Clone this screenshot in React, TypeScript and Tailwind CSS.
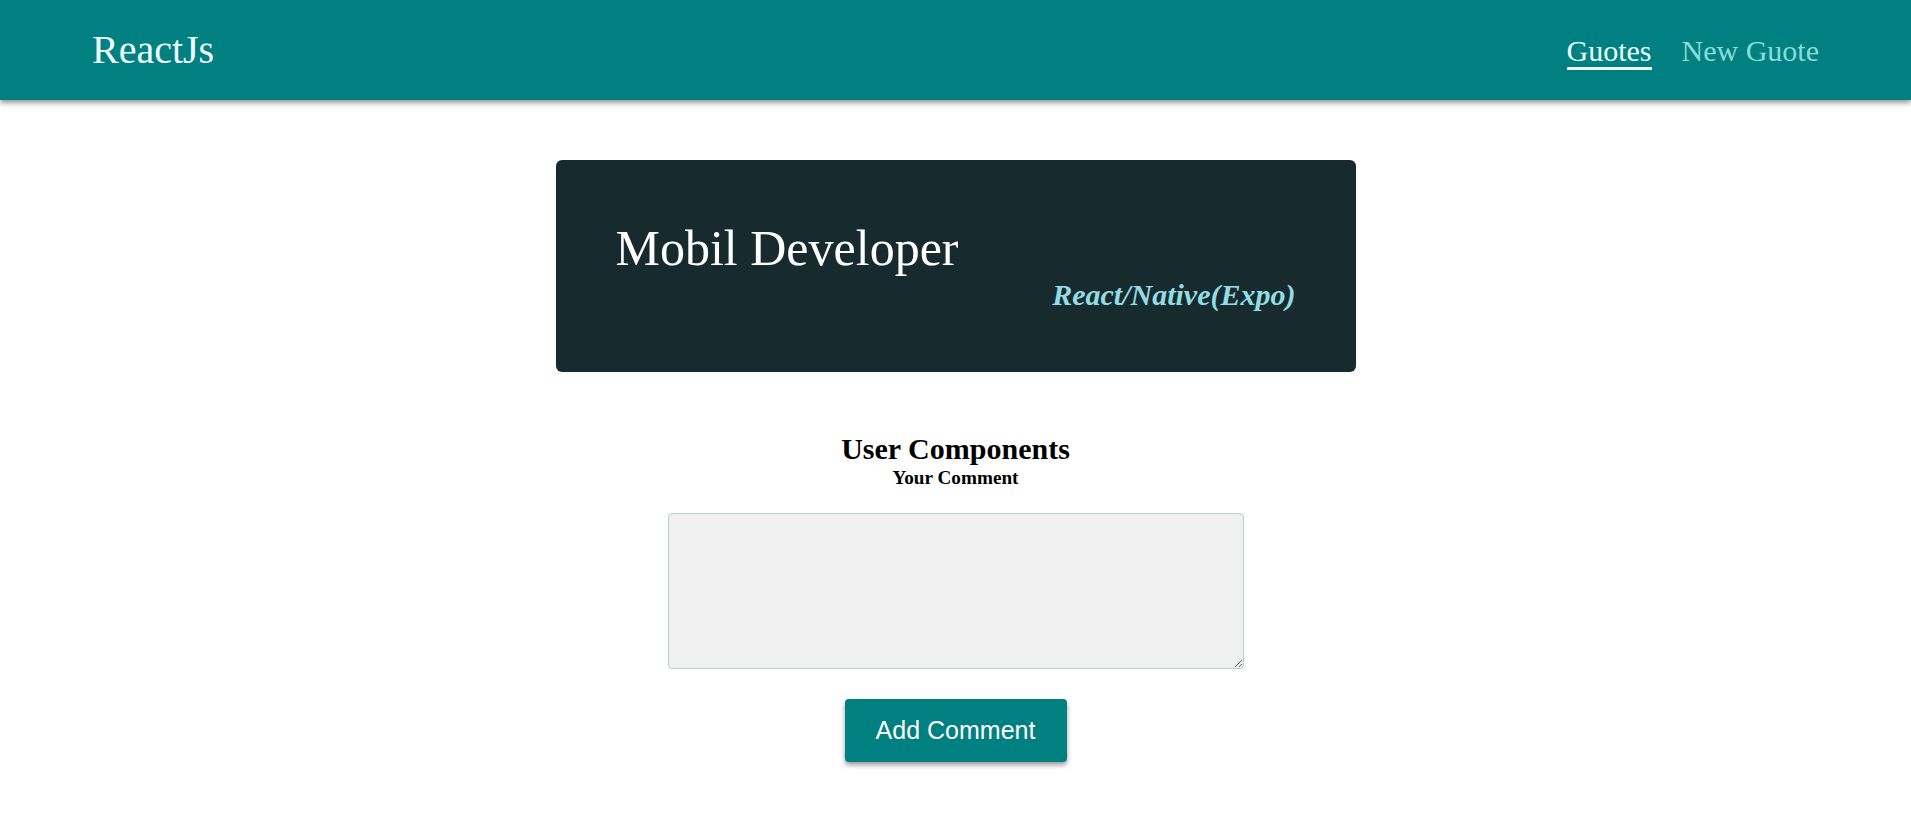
import React from "react";

export default function App() {
  return (
    <div className="min-h-screen bg-white" style={{ fontFamily: '"Liberation Serif", "Times New Roman", serif' }}>
      <header className="flex h-[100px] items-start justify-between bg-[#008080] px-[92px] shadow-[0_3px_5px_rgba(0,0,0,0.4)]">
        <div className="mt-[30px] text-[40px] leading-none text-[#f0fffe]">ReactJs</div>
        <nav className="mt-[36px] flex gap-[30px] text-[30px] leading-none">
          <a className="border-b-[3px] border-[#f0fffe] pb-[1px] text-[#eafffd]">Guotes</a>
          <a className="text-[#8adcd8]">New Guote</a>
        </nav>
      </header>

      <main className="flex flex-col items-center">
        <section className="mt-[60px] flex h-[212px] w-[800px] flex-col rounded-[6px] bg-[#172a2d] px-[60px] pt-[63px]">
          <h1 className="text-[50px] leading-none text-white">Mobil Developer</h1>
          <p className="mt-[7px] text-right text-[30px] font-bold italic leading-none text-[#92dce3]">
            React/Native(Expo)
          </p>
        </section>

        <h2 className="mt-[62px] text-[30px] font-bold leading-none text-black">User Components</h2>
        <label className="mt-[4px] text-[19.2px] font-bold leading-none text-black">Your Comment</label>

        <textarea className="mt-[26px] block h-[156px] w-[576px] rounded-[4px] border border-[#bcd0cf] bg-[#f0f0f0] outline-none" />

        <button
          className="mt-[30px] flex h-[63px] w-[222px] items-center justify-center rounded-[4px] bg-[#008080] text-[25px] leading-none text-white shadow-[0_3px_5px_rgba(0,0,0,0.4)]"
          style={{ fontFamily: '"Liberation Sans", Arial, sans-serif' }}
        >
          Add Comment
        </button>
      </main>
    </div>
  );
}
